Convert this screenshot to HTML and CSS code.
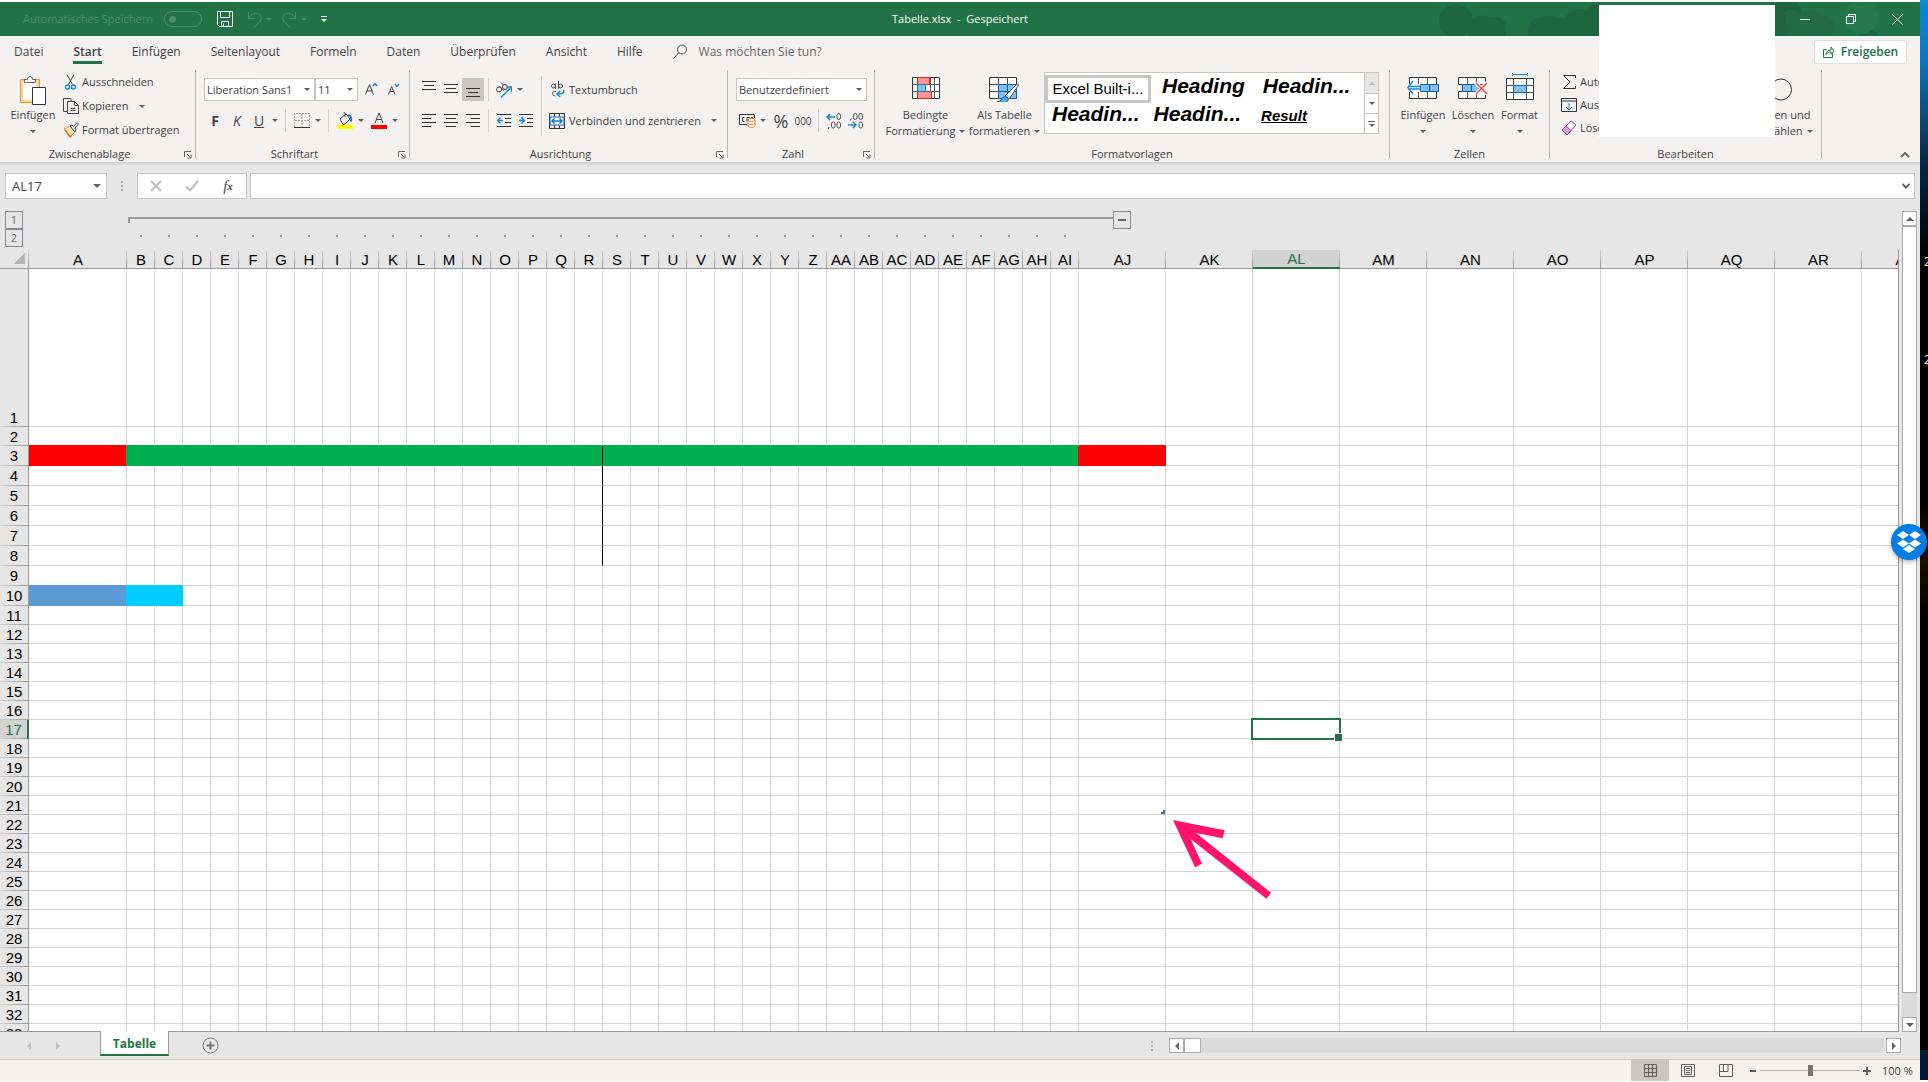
FILE: index.html
```html
<!DOCTYPE html>
<html lang="de">
<head>
    <meta charset="UTF-8">
    <meta name="viewport" content="width=device-width, initial-scale=1.0">
    <title>Tabelle.xlsx</title>
    <link rel="stylesheet" href="styles.css">
</head>
<body>

<div class="window">

    <!-- Titelleiste -->
    <header class="titlebar">
        <svg class="titlebar-art" width="500" height="34" viewBox="1420 2 500 34" aria-hidden="true">
            <g fill="#1e6640">
                <circle cx="1456" cy="21" r="17"/>
                <path d="M1468 36V19q12-6 22-2 14-2 16 9v10z"/>
                <path d="M1528 36q-2-18 12-18 10-4 24 0 8-10 22-9 6-6 14-5v32z"/>
                <path d="M1775 2h20q10 8 5 14 10-2 14 5 6 6-4 10-6 4-10 5h-25z"/>
                <circle cx="1868" cy="38" r="10"/>
            </g>
            <path d="M1784 12q10-6 16 2 12-8 20 2 14-2 14 10 0 8-6 10h-40z" fill="#216c43"/>
            <circle cx="1861" cy="17" r="17" fill="#247a4b"/>
        </svg>
        <div class="quick-access">
            <span class="autosave">Automatisches Speichern</span>
            <button class="toggle" aria-label="Automatisches Speichern"></button>
            <button class="qa-save" aria-label="Speichern">
                <svg width="16" height="16" viewBox="0 0 16 16" fill="none" stroke="#fff">
                    <path d="M.5.5h15v15h-13l-2-2zM3.500.5v6h9v-6M4.500 15.500v-5h7v5"/>
                    <path d="M6.500 12.500v3"/>
                </svg>
            </button>
            <button class="qa-dim" aria-label="Rückgängig">
                <svg width="15" height="17" viewBox="0 0 15 17" fill="none" stroke="#4b9068">
                    <path d="M1.500 1v6.500H8M1.500 7.500C4 3 7 2 10 2.500c5 1 5 6 2.500 8.500L7 16.500"/>
                </svg>
                <span class="caret"></span>
            </button>
            <button class="qa-dim" aria-label="Wiederholen">
                <svg width="15" height="17" viewBox="0 0 15 17" fill="none" stroke="#4b9068">
                    <path d="M13.500 1v6.500H7M13.500 7.500C11 3 8 2 5 2.500c-5 1-5 6-2.500 8.500L8 16.500"/>
                </svg>
                <span class="caret"></span>
            </button>
            <button class="qa-more" aria-label="Anpassen"><span class="caret"></span></button>
        </div>
        <div class="doc-title">Tabelle.xlsx&nbsp; -&nbsp; Gespeichert</div>
        <div class="window-buttons">
            <button aria-label="Minimieren"><svg width="11" height="11" viewBox="0 0 11 11" stroke="#fff"><path d="M0 5.500h10"/></svg></button>
            <button aria-label="Verkleinern"><svg width="11" height="11" viewBox="0 0 11 11" fill="none" stroke="#fff"><path d="M.5 2.500h7v7h-7zM2.500 2.500v-2h7v7h-2"/></svg></button>
            <button aria-label="Schließen"><svg width="11" height="11" viewBox="0 0 11 11" stroke="#fff"><path d="M.5.5l10 10M10.500.5l-10 10"/></svg></button>
        </div>
    </header>

    <!-- Menüband: Register -->
    <nav class="tabs">
        <a href="#">Datei</a>
        <a href="#" class="active">Start</a>
        <a href="#">Einfügen</a>
        <a href="#">Seitenlayout</a>
        <a href="#">Formeln</a>
        <a href="#">Daten</a>
        <a href="#">Überprüfen</a>
        <a href="#">Ansicht</a>
        <a href="#">Hilfe</a>
        <a href="#" class="tell-me">
            <svg width="15" height="15" viewBox="0 0 15 15" fill="none" stroke="#555"><circle cx="9" cy="5.500" r="4.500"/><path d="M5.800 8.700L.5 14.500"/></svg>
            Was möchten Sie tun?
        </a>
        <button class="share">
            <svg width="12" height="12" viewBox="0 0 12 12" fill="none" stroke="#217346"><path d="M3.500 3.500h-3v8h9v-4M3 8.500c0-3 2-4.500 5-4.500V1l3 4-3 3.500V6C6 6 4.500 6.500 3 8.500z"/></svg>
            Freigeben
        </button>
    </nav>

    <!-- Menüband: Gruppen -->
    <div class="ribbon">
        <section class="group group-clipboard">
            <div class="group-body">
                <button class="big-button">
                    <span class="icon">
                        <svg width="28" height="31" viewBox="0 0 28 31" fill="none">
                            <path d="M1.500 4.500h19v23h-19z" fill="#fff" stroke="#e8912d"/><path d="M3 6h16v20H3z" stroke="#fbd98f" stroke-width="2"/>
                            <path d="M5.500 7.500v-3h3c0-4 5-4 5 0h3v3z" fill="#fff" stroke="#666"/>
                            <path d="M13.500 12.500h13v17h-13z" fill="#fff" stroke="#333"/>
                        </svg>
                    </span>
                    <span>Einfügen</span>
                    <span class="line"><span class="caret"></span></span>
                </button>
                <div class="small-list">
                    <button>
                        <svg width="16" height="16" viewBox="0 0 16 16" fill="none" stroke="#444"><path d="M4 .5l5.500 10M11 .5l-5.500 10"/><g stroke="#1e8bcd" stroke-width="1.500"><circle cx="4.500" cy="13" r="2"/><circle cx="10.500" cy="13" r="2"/></g></svg>
                        Ausschneiden
                    </button>
                    <button>
                        <svg width="16" height="16" viewBox="0 0 16 16" fill="none" stroke="#444"><path d="M4.500 13.500h-4V.5h7M8 3.500h-3.500v12h11v-8l-4-4H8V.5M11.500 3.500v4h4M7.500 10.500h5M7.500 12.500h5"/></svg>
                        Kopieren <span class="caret"></span>
                    </button>
                    <button>
                        <svg width="16" height="16" viewBox="0 0 16 16" fill="none"><path d="M1 7l6-3 5 6-5 5z" fill="#fce0b8" stroke="#e8912d"/><path d="M2 8l5 7 2-2" stroke="#e06c1c" stroke-width="1.500"/><path d="M7 4l2-1 1.500 1.500L14 .5l1.500 1.500-3.500 4L13 8l-1 2z" fill="#fff" stroke="#444"/></svg>
                        Format übertragen
                    </button>
                </div>
            </div>
            <h2>Zwischenablage</h2>
            <button class="launcher" aria-label="Zwischenablage öffnen"><svg width="8" height="8" viewBox="0 0 8 8" fill="none" stroke="#666"><path d="M.5 6V.5H7M3 3l3.500 3.500M7 3.500V7H3.500"/></svg></button>
        </section>
        <span class="divider"></span>

        <section class="group group-font">
            <div class="group-body rows">
                <div class="row">
                    <span class="combo combo-font"><select aria-label="Schriftart"><option>Liberation Sans1</option></select><span class="caret"></span></span>
                    <span class="combo combo-size"><select aria-label="Schriftgrad"><option>11</option></select><span class="caret"></span></span>
                    <button class="tool spaced" aria-label="Schrift vergrößern"><svg width="15" height="14" viewBox="0 0 15 14" fill="none" stroke="#444"><path d="M1.500 11.500l4-10 4 10M3 8h5.500"/><path d="M9 3l2-2.500L13 3" stroke="#1e8bcd" stroke-width="1.500"/></svg></button>
                    <button class="tool" aria-label="Schrift verkleinern"><svg width="15" height="14" viewBox="0 0 15 14" fill="none" stroke="#444"><path d="M2.500 11.500l3-8 3.500 8M3.500 8.500h4.500"/><path d="M9 1l2 2.500L13 1" stroke="#1e8bcd" stroke-width="1.500"/></svg></button>
                </div>
                <div class="row">
                    <button class="tool letter"><b>F</b></button>
                    <button class="tool letter"><i>K</i></button>
                    <button class="tool letter"><u>U</u></button>
                    <button class="drop" aria-label="Unterstreichen"><span class="caret"></span></button>
                    <span class="sep"></span>
                    <button class="tool" aria-label="Rahmen"><svg width="16" height="16" viewBox="0 0 16 16" fill="none"><path d="M.5 14V.5h15V14M8 1v13M1 7.500h14" stroke="#aaa" stroke-dasharray="2 1"/><path d="M0 14.500h16" stroke="#333"/></svg></button>
                    <button class="drop" aria-label="Rahmenauswahl"><span class="caret"></span></button>
                    <span class="sep"></span>
                    <button class="tool" aria-label="Füllfarbe"><svg width="16" height="17" viewBox="0 0 16 17" fill="none"><path d="M3 7l6-5 4 5-5 5-2 .5zM8 5V.8L6.500.5" stroke="#444"/><path d="M11 3.500c3-.5 3.500 2 3 6" stroke="#2472b8" stroke-width="2"/><path d="M0 13h16v4H0z" fill="#ff0"/></svg></button>
                    <button class="drop" aria-label="Füllfarbe wählen"><span class="caret"></span></button>
                    <button class="tool spaced" aria-label="Schriftfarbe"><svg width="16" height="17" viewBox="0 0 16 17" fill="none"><path d="M4 11L8 1l4 10M5.500 7.500h5" stroke="#444"/><path d="M0 13h16v4H0z" fill="#f00"/></svg></button>
                    <button class="drop" aria-label="Schriftfarbe wählen"><span class="caret"></span></button>
                </div>
            </div>
            <h2>Schriftart</h2>
            <button class="launcher" aria-label="Schriftart öffnen"><svg width="8" height="8" viewBox="0 0 8 8" fill="none" stroke="#666"><path d="M.5 6V.5H7M3 3l3.500 3.500M7 3.500V7H3.500"/></svg></button>
        </section>
        <span class="divider"></span>

        <section class="group group-align">
            <div class="group-body">
                <div class="rows">
                    <div class="row">
                        <button class="tool" aria-label="Oben ausrichten"><svg width="14" height="18" viewBox="0 0 14 18" stroke="#333"><path d="M0 .5h14M2 4.500h10M0 8.500h14"/></svg></button>
                        <button class="tool" aria-label="Zentriert ausrichten"><svg width="14" height="18" viewBox="0 0 14 18" stroke="#333"><path d="M0 3.500h14M2 7.500h10M0 11.500h14"/></svg></button>
                        <button class="tool pressed" aria-label="Unten ausrichten"><svg width="14" height="18" viewBox="0 0 14 18" stroke="#333"><path d="M0 7.500h14M2 11.500h10M0 15.500h14"/></svg></button>
                        <span class="sep"></span>
                        <button class="tool" aria-label="Ausrichtung"><svg width="16" height="16" viewBox="0 0 16 16" fill="none" stroke="#444"><circle cx="3" cy="7.500" r="2.500"/><path d="M3.500 4l4 4.500"/><circle cx="9" cy="5" r="2.500"/><path d="M5 .5l3 3"/><path d="M5 15.500L15 5.500M10.500 5h5v5" stroke="#1e8bcd" stroke-width="1.500"/></svg></button>
                        <button class="drop" aria-label="Ausrichtung wählen"><span class="caret"></span></button>
                    </div>
                    <div class="row">
                        <button class="tool" aria-label="Linksbündig"><svg width="14" height="14" viewBox="0 0 14 14" stroke="#333"><path d="M0 .5h14M0 4.500h9M0 8.500h14M0 12.500h9"/></svg></button>
                        <button class="tool" aria-label="Zentriert"><svg width="14" height="14" viewBox="0 0 14 14" stroke="#333"><path d="M0 .5h14M2 4.500h10M0 8.500h14M2 12.500h10"/></svg></button>
                        <button class="tool" aria-label="Rechtsbündig"><svg width="14" height="14" viewBox="0 0 14 14" stroke="#333"><path d="M0 .5h14M5 4.500h9M0 8.500h14M5 12.500h9"/></svg></button>
                        <span class="sep"></span>
                        <button class="tool" aria-label="Einzug verkleinern"><svg width="14" height="14" viewBox="0 0 14 14" fill="none" stroke="#333"><path d="M0 .5h14M8 4.500h6M8 8.500h6M0 12.500h14"/><path d="M6 6.500H.5M3.500 3.500l-3 3 3 3" stroke="#1e8bcd" stroke-width="1.500"/></svg></button>
                        <button class="tool" aria-label="Einzug vergrößern"><svg width="14" height="14" viewBox="0 0 14 14" fill="none" stroke="#333"><path d="M0 .5h14M8 4.500h6M8 8.500h6M0 12.500h14"/><path d="M0 6.500h5.500M2.500 3.500l3 3-3 3" stroke="#1e8bcd" stroke-width="1.500"/></svg></button>
                    </div>
                </div>
                <span class="tall-sep"></span>
                <div class="rows">
                    <div class="row">
                        <button class="text-tool">
                            <svg width="16" height="17" viewBox="0 0 16 17" fill="none" stroke="#444"><circle cx="4.500" cy="5" r="2"/><path d="M6.500 2.500v5M9.500 0v7.500"/><circle cx="11.500" cy="5" r="2"/><path d="M7 10.500c-4-1.500-5 4.500-.5 4.500"/><path d="M14.500 9c1 3-1 4-6 4M11 10l-3 3 3 3" stroke="#1e8bcd" stroke-width="1.500"/></svg>
                            Textumbruch
                        </button>
                    </div>
                    <div class="row">
                        <button class="text-tool">
                            <svg width="16" height="16" viewBox="0 0 16 16" fill="none"><path d="M.5.5h15v15H.5zM5.500.5v3M10.500.5v3M5.500 12.500v3M10.500 12.500v3" stroke="#333"/><path d="M1 4h14v8H1z" fill="#fff" stroke="#0a64ad"/><path d="M3 8h10M5.500 5.500L3 8l2.500 2.500M10.500 5.500L13 8l-2.500 2.500" stroke="#1778c8" stroke-width="1.500"/></svg>
                            Verbinden und zentrieren <span class="caret"></span>
                        </button>
                    </div>
                </div>
            </div>
            <h2>Ausrichtung</h2>
            <button class="launcher" aria-label="Ausrichtung öffnen"><svg width="8" height="8" viewBox="0 0 8 8" fill="none" stroke="#666"><path d="M.5 6V.5H7M3 3l3.500 3.500M7 3.500V7H3.500"/></svg></button>
        </section>
        <span class="divider"></span>

        <section class="group group-number">
            <div class="group-body rows">
                <div class="row">
                    <span class="combo combo-number"><select aria-label="Zahlenformat"><option>Benutzerdefiniert</option></select><span class="caret"></span></span>
                </div>
                <div class="row">
                    <button class="tool" aria-label="Währung"><svg width="17" height="14" viewBox="0 0 17 14" fill="none"><path d="M8 10.500H.5V.5h15V4" stroke="#333"/><path d="M5.500 3.500h-2v4h2M8 7.500v-4h2.500M12 3.500h2" stroke="#444"/><path d="M9 6v6c0 2 7 2 7 0V6" fill="#fff" stroke="#e8862d"/><ellipse cx="12.500" cy="6" rx="3.500" ry="1.500" fill="#fff" stroke="#e8862d"/><path d="M9 9c0 2 7 2 7 0" stroke="#e8862d"/></svg></button>
                    <button class="drop" aria-label="Währung wählen"><span class="caret"></span></button>
                    <button class="tool percent spaced">%</button>
                    <button class="tool thousands">000</button>
                    <span class="sep"></span>
                    <button class="tool" aria-label="Dezimalstelle hinzufügen"><svg width="16" height="16" viewBox="0 0 16 16" fill="none" stroke="#555"><rect x="11" y=".5" width="3.500" height="6" rx="1.700"/><rect x="5.500" y="9" width="3.500" height="6" rx="1.700"/><rect x="11" y="9" width="3.500" height="6" rx="1.700"/><path d="M3 14l-.8 2"/><path d="M9 4H1M4 1L1 4l3 3" stroke="#1e8bcd" stroke-width="1.500"/></svg></button>
                    <button class="tool" aria-label="Dezimalstelle löschen"><svg width="16" height="16" viewBox="0 0 16 16" fill="none" stroke="#555"><rect x="5.500" y=".5" width="3.500" height="6" rx="1.700"/><rect x="11" y=".5" width="3.500" height="6" rx="1.700"/><rect x="11" y="9" width="3.500" height="6" rx="1.700"/><path d="M3 5.500L2.200 7.500"/><path d="M0 12h8M5 9l3 3-3 3" stroke="#1e8bcd" stroke-width="1.500"/></svg></button>
                </div>
            </div>
            <h2>Zahl</h2>
            <button class="launcher" aria-label="Zahl öffnen"><svg width="8" height="8" viewBox="0 0 8 8" fill="none" stroke="#666"><path d="M.5 6V.5H7M3 3l3.500 3.500M7 3.500V7H3.500"/></svg></button>
        </section>
        <span class="divider"></span>

        <section class="group group-styles">
            <div class="group-body">
                <button class="big-button w-conditional">
                    <span class="icon">
                        <svg width="28" height="22" viewBox="0 0 28 22" fill="none">
                            <path d="M.5.5h27v21H.5z" fill="#fff" stroke="#333"/><path d="M.5 7.500h27M.5 14.500h27M5.500.5v21M18.500.5v21M22.500.5v21" stroke="#555"/>
                            <path d="M5.500.5h12v7h-12zM5.500 14.500h14v7h-14z" fill="#ff9494" stroke="#d8202a"/><path d="M5.500 7.500h8v7h-8z" fill="#83beec" stroke="#1e74bd"/><path d="M14 8h4v6h-4z" fill="#fff"/>
                        </svg>
                    </span>
                    <span>Bedingte</span>
                    <span class="line">Formatierung <span class="caret"></span></span>
                </button>
                <button class="big-button w-table">
                    <span class="icon">
                        <svg width="32" height="28" viewBox="0 -3 32 28" fill="none">
                            <path d="M.5.5h27v21H.5z" fill="#fff" stroke="#333"/><path d="M.5 7.500h27M.5 14.500h27M9.500.5v21M18.500.5v21" stroke="#555"/>
                            <path d="M9.500 7.500h18v14h-18z" fill="#83beec"/><path d="M9.500 7.500h18v14h-18zM9.500 14.500h18M18.500 7.500v14" stroke="#0a64ad"/>
                            <path d="M16 19L27 8q3-2 2 1l-9 13z" fill="#fff" stroke="#555"/><path d="M8 25q4 0 5-4 3-3 6 0 1 5-6 5z" fill="#5ea6e0" stroke="#0a64ad"/>
                        </svg>
                    </span>
                    <span>Als Tabelle</span>
                    <span class="line">formatieren <span class="caret"></span></span>
                </button>
                <div class="gallery">
                    <div class="gallery-items">
                        <div class="gallery-row first">
                            <button class="style-default">Excel Built-i...</button>
                            <button class="style-heading">Heading</button>
                            <button class="style-heading">Headin...</button>
                        </div>
                        <div class="gallery-row">
                            <button class="style-heading">Headin...</button>
                            <button class="style-heading">Headin...</button>
                            <button class="style-result">Result</button>
                        </div>
                    </div>
                    <div class="gallery-scroll">
                        <button class="up" aria-label="Nach oben"><span class="caret"></span></button>
                        <button aria-label="Nach unten"><span class="caret"></span></button>
                        <button class="more" aria-label="Weitere"><span class="caret"></span></button>
                    </div>
                </div>
            </div>
            <h2>Formatvorlagen</h2>
        </section>
        <span class="divider"></span>

        <section class="group group-cells">
            <div class="group-body">
                <button class="big-button w-cell">
                    <span class="icon">
                        <svg width="32" height="22" viewBox="0 0 32 22" fill="none">
                            <path d="M2.500.5h27v21h-27z" fill="#fff" stroke="#333"/><path d="M11.500.5v21M20.500.5v21" stroke="#555"/>
                            <path d="M1 7h30v8H1z" fill="#f3f2f1"/><path d="M13.500 7.500h18v7h-18z" fill="#83beec" stroke="#0a64ad"/><path d="M22.500 7.500v7" stroke="#0a64ad"/>
                            <path d="M6 4L.8 10.500 6 17M1 9.500h13M1 12h13" stroke="#1e8bcd" stroke-width="1.300"/>
                        </svg>
                    </span>
                    <span>Einfügen</span>
                    <span class="line"><span class="caret"></span></span>
                </button>
                <button class="big-button w-cell">
                    <span class="icon">
                        <svg width="30" height="22" viewBox="0 0 30 22" fill="none">
                            <path d="M.5.5h27v7H.5zM.5 14.500h27v7H.5z" fill="#fff" stroke="#333"/><path d="M9.500.5v7M18.500.5v7M9.500 14.500v7M18.500 14.500v7" stroke="#555"/>
                            <path d="M4.500 7.500h16v7h-16zM13.500 7.500v7" fill="#83beec" stroke="#0a64ad"/>
                            <path d="M18 6l11 11M29 6L18 17" stroke="#f3f2f1" stroke-width="4"/><path d="M18 6l11 11M29 6L18 17" stroke="#e8504c" stroke-width="1.500"/>
                        </svg>
                    </span>
                    <span>Löschen</span>
                    <span class="line"><span class="caret"></span></span>
                </button>
                <button class="big-button w-format">
                    <span class="icon">
                        <svg width="28" height="32" viewBox="0 -6 28 32" fill="none">
                            <path d="M.5.5h27v21H.5z" fill="#fff" stroke="#333"/><path d="M.5 7.500h27M.5 14.500h27M7.500.5v21M20.500.5v21" stroke="#555"/>
                            <path d="M7.500 7.500h13v7h-13z" fill="#83beec" stroke="#0a64ad"/><path d="M6.500-5v3M21.500-5v3M6.500-3.500h15" stroke="#1e8bcd"/>
                        </svg>
                    </span>
                    <span>Format</span>
                    <span class="line"><span class="caret"></span></span>
                </button>
            </div>
            <h2>Zellen</h2>
        </section>
        <span class="divider"></span>

        <section class="group group-edit">
            <div class="group-body">
                <div class="small-list tight">
                    <button><svg width="16" height="16" viewBox="0 0 16 16" fill="none" stroke="#333"><path d="M14.500 4V1.500h-12L9 8l-6.500 6.500h12V12"/></svg>AutoSumme</button>
                    <button><svg width="16" height="16" viewBox="0 0 16 16" fill="none" stroke="#333"><path d="M.5 1.500h15v13H.5zM.5 4h15"/><path d="M8 6v7M5 10l3 3 3-3" stroke="#1e8bcd"/></svg>Ausfüllen</button>
                    <button><svg width="16" height="16" viewBox="0 0 16 16" fill="none"><path d="M1 10l9-9 5 4-9 10z" fill="#fff" stroke="#a33bab"/><path d="M1 10l4-4 5 4.500L6 15z" fill="#d9a3dd" stroke="#a33bab"/></svg>Löschen</button>
                </div>
                <button class="big-button w-find">
                    <span class="icon"><svg width="28" height="26" viewBox="0 0 28 26" fill="none" stroke="#333"><circle cx="15" cy="11.500" r="10.500"/><path d="M7.500 19L1 25.500"/></svg></span>
                    <span>Suchen und</span>
                    <span class="line">auswählen <span class="caret"></span></span>
                </button>
            </div>
            <h2>Bearbeiten</h2>
        </section>
        <span class="divider"></span>
        <button class="collapse" aria-label="Menüband reduzieren"><svg width="10" height="6" viewBox="0 0 10 6" fill="none" stroke="#666" stroke-width="2"><path d="M1 5l4-4 4 4"/></svg></button>
    </div>

    <!-- Bearbeitungsleiste -->
    <div class="formula-bar">
        <span class="name-box"><input type="text" value="AL17" aria-label="Namenfeld"><span class="caret"></span></span>
        <span class="grip"></span>
        <div class="formula-buttons">
            <button aria-label="Abbrechen"><svg width="12" height="12" viewBox="0 0 12 12" stroke="#bbb" stroke-width="1.800"><path d="M1 1l10 10M11 1L1 11"/></svg></button>
            <button aria-label="Eingeben"><svg width="14" height="12" viewBox="0 0 14 12" fill="none" stroke="#bbb" stroke-width="2"><path d="M1 6.500l4 4L13 1"/></svg></button>
            <button class="fx"><i>f</i><sub>x</sub></button>
        </div>
        <span class="formula-input"><input type="text" aria-label="Bearbeitungsleiste"><svg width="8" height="6" viewBox="0 0 8 6" fill="none" stroke="#666" stroke-width="2"><path d="M.5 1L4 4.500 7.500 1"/></svg></span>
    </div>

    <!-- Tabellenblatt -->
    <main class="workbook">
        <div class="sheet">
            <div class="outline">
                <div class="outline-levels">
                    <button>1</button>
                    <button>2</button>
                </div>
                <div class="outline-track">
                    <div class="outline-line"><span class="outline-bar"></span><button aria-label="Gruppe ausblenden"></button></div>
                    <div class="outline-dots" id="outlineDots"></div>
                </div>
            </div>
            <div class="grid-wrap">
                <table class="grid" id="grid"></table>
            </div>
            <svg class="arrow" width="100" height="81" viewBox="157 357 300 243" aria-hidden="true">
                <path d="M160 360l155 31-6 24-80-16 225 179-14 18L213 417l34 74-21 11z" fill="#ff1469"/>
            </svg>
        </div>
        <div class="v-scroll">
            <button aria-label="Nach oben blättern"><span class="caret"></span></button>
            <div class="v-track"><div class="v-thumb"></div></div>
            <button aria-label="Nach unten blättern"><span class="caret"></span></button>
        </div>
    </main>

    <!-- Blattregister -->
    <div class="sheet-bar">
        <button class="nav-arrow" aria-label="Vorheriges Blatt"></button>
        <button class="nav-arrow next" aria-label="Nächstes Blatt"></button>
        <button class="sheet-tab">Tabelle</button>
        <button class="add-sheet" aria-label="Neues Blatt"><svg width="17" height="17" viewBox="0 0 17 17" fill="none" stroke="#777"><circle cx="8.500" cy="8.500" r="7.500"/><path d="M8.500 4.500v8M4.500 8.500h8" stroke-width="2"/></svg></button>
        <span class="grip"></span>
        <div class="h-scroll">
            <button class="left" aria-label="Nach links blättern"></button>
            <div class="h-track"><div class="h-thumb"></div></div>
            <button class="right" aria-label="Nach rechts blättern"></button>
        </div>
    </div>

    <footer class="status-bar">
        <button class="view active" aria-label="Normal"><svg width="13" height="13" viewBox="0 0 13 13" fill="none" stroke="#605e5c"><path d="M.5.5h12v12H.5zM4.500.5v12M8.500.5v12M.5 4.500h12M.5 8.500h12"/></svg></button>
        <button class="view" aria-label="Seitenlayout"><svg width="14" height="13" viewBox="0 0 14 13" fill="none" stroke="#605e5c"><path d="M.5.5h13v12H.5zM3.500 2.500h7v8h-7zM5 4.500h4M5 6.500h4M5 8.500h4"/></svg></button>
        <button class="view" aria-label="Umbruchvorschau"><svg width="14" height="13" viewBox="0 0 14 13" fill="none" stroke="#605e5c"><path d="M.5.5h13v12H.5zM4.500.5v7M9 .5v7H.5"/></svg></button>
        <button class="zoom-button" aria-label="Verkleinern"><svg width="8" height="8" viewBox="0 0 8 8" stroke="#605e5c" stroke-width="2"><path d="M1 4h6"/></svg></button>
        <input class="zoom" type="range" min="0" max="100" value="50" aria-label="Zoom">
        <button class="zoom-button" aria-label="Vergrößern"><svg width="8" height="8" viewBox="0 0 8 8" stroke="#605e5c" stroke-width="2"><path d="M0 4h8M4 0v8"/></svg></button>
        <span class="zoom-value">100 %</span>
    </footer>

    <div class="cover"></div>
</div>

<!-- Sichtbarer Rand des Desktops -->
<aside class="desktop">
    <span>2</span>
    <span>2</span>
</aside>
<button class="dropbox" aria-label="Dropbox">
    <svg width="24" height="22" viewBox="0 0 24 22" fill="#fff"><path d="M6 0l6 4-6 4-6-4zM18 0l6 4-6 4-6-4zM6 8.500l6 4-6 4-6-4zM18 8.500l6 4-6 4-6-4zM12 14l6 4-6 4-6-4z"/></svg>
</button>

<script src="script.js"></script>
</body>
</html>
```
FILE: styles.css
```css
* {
    box-sizing: border-box;
}
body {
    margin: 0;
    padding: 2px 0 1px;
    height: 100vh;
    display: flex;
    position: relative;
    overflow: hidden;
    background: #fff;
    color: #444;
    font-family: "Open Sans", "Noto Sans", sans-serif;
    font-size: 11px;
    line-height: 16px;
}
button, input, select {
    font: inherit;
    color: inherit;
    margin: 0;
    padding: 0;
    border: 0;
    background: none;
    outline: none;
}
button {
    display: flex;
    align-items: center;
    justify-content: center;
    white-space: nowrap;
}
a {
    color: inherit;
    text-decoration: none;
}
svg {
    flex: none;
    display: block;
}
.window {
    flex: 1;
    min-width: 0;
    display: flex;
    flex-direction: column;
    position: relative;
    background: #e6e6e6;
}
.caret {
    flex: none;
    width: 0;
    height: 0;
    border: 3px solid transparent;
    border-top-color: #605e5c;
    border-bottom-width: 0;
}

/* Titelleiste */
.titlebar {
    position: relative;
    display: grid;
    grid-template-columns: 1fr auto 1fr;
    align-items: center;
    height: 34px;
    background: #217346;
    color: #fff;
}
.titlebar-art {
    position: absolute;
    right: 0;
    top: 0;
}
.quick-access {
    display: flex;
    align-items: center;
    padding-left: 23px;
}
.autosave {
    width: 141px;
    color: #4b9068;
    white-space: nowrap;
}
.toggle {
    width: 38px;
    height: 16px;
    padding-left: 4px;
    border: 1px solid #4b9068;
    border-radius: 8px;
    justify-content: flex-start;
}
.toggle::before {
    content: "";
    width: 7px;
    height: 7px;
    border-radius: 50%;
    background: #4b9068;
}
.qa-save {
    margin-left: 15px;
}
.qa-dim {
    gap: 4px;
    margin-left: 15px;
    width: 23px;
}
.qa-dim .caret {
    border-top-color: #4b9068;
}
.qa-more {
    flex-direction: column;
    gap: 2px;
    margin-left: 15px;
}
.qa-more::before {
    content: "";
    width: 6px;
    height: 1px;
    background: #fff;
}
.qa-more .caret {
    border-top-color: #fff;
}
.qa-dim + .qa-dim {
    margin-left: 12px;
}
.window-buttons {
    position: relative;
    display: flex;
    justify-content: flex-end;
}
.window-buttons button {
    width: 46px;
    height: 34px;
}

/* Register */
.tabs {
    display: flex;
    align-items: center;
    gap: 30px;
    height: 30px;
    padding: 2px 13px 0 14px;
    background: #f3f2f1;
    white-space: nowrap;
    font-size: 12px;
}
.tabs a.active {
    position: relative;
    font-weight: 600;
}
.tabs a.active::after {
    content: "";
    position: absolute;
    left: 0;
    right: 0;
    bottom: -4px;
    height: 3px;
    background: #217346;
}
.tabs .tell-me {
    display: flex;
    gap: 11px;
    color: #666;
}
.share {
    gap: 6px;
    margin-left: auto;
    width: 93px;
    height: 24px;
    border: 1px solid #e1dfdd;
    border-radius: 2px;
    background: #fff;
    color: #217346;
    font-weight: 600;
}

/* Menüband */
.ribbon {
    display: flex;
    align-items: flex-start;
    height: 99px;
    padding-top: 4px;
    background: linear-gradient(#f3f2f1 96px, #d0cecc 96px, #e0dfde);
}
.divider {
    width: 1px;
    height: 88px;
    background: #b8b6b4;
}
.group {
    position: relative;
    flex: none;
    display: flex;
    flex-direction: column;
}
.group h2 {
    margin: 0;
    font-size: 11px;
    font-weight: normal;
    line-height: 16px;
    text-align: center;
}
.group-body {
    display: flex;
    height: 76px;
}
.group-clipboard {
    width: 195px;
}
.group-font {
    width: 213px;
}
.group-align {
    width: 317px;
}
.group-number {
    width: 146px;
}
.group-styles {
    width: 514px;
}
.group-cells {
    width: 159px;
}
.group-edit {
    width: 271px;
}
.group-clipboard h2, .group-font h2, .group-align h2, .group-number h2 {
    padding-right: 16px;
}
.launcher {
    position: absolute;
    right: 3px;
    bottom: 3px;
}
.big-button {
    flex-direction: column;
    justify-content: flex-start;
    padding-top: 4px;
    width: 54px;
}
.big-button .icon {
    display: flex;
    align-items: center;
    justify-content: center;
    height: 33px;
}
.big-button .line {
    display: flex;
    align-items: center;
    gap: 4px;
    height: 16px;
}
.group-styles .icon, .group-cells .icon {
    height: 33px;
    padding-bottom: 5px;
}
.group-clipboard .group-body {
    padding-left: 6px;
    gap: 3px;
}
.small-list button {
    gap: 3px;
    height: 24px;
}
.small-list .caret {
    margin-left: 8px;
}
.small-list.tight button {
    height: 23px;
}
.rows {
    display: flex;
    flex-direction: column;
    gap: 8px;
    padding-top: 8px;
}
.row {
    display: flex;
    height: 23px;
}
.group-font .rows, .group-number .rows {
    padding-left: 8px;
}
.tool {
    width: 22px;
}
.tool.pressed {
    background: #c8c6c4;
}
.spaced {
    margin-left: 2px;
}
.drop {
    width: 10px;
}
.letter {
    font-size: 14px;
}
.sep {
    width: 1px;
    margin: 0 4px;
    background: #d2d0ce;
}
.group-font .sep {
    margin: 0 5px;
}
.tall-sep {
    width: 1px;
    height: 60px;
    margin: 6px 7px 0 4px;
    background: #d2d0ce;
}
.group-align .group-body {
    padding-left: 8px;
}
.text-tool {
    gap: 4px;
}
.text-tool .caret {
    margin-left: 6px;
}
.percent {
    font-size: 18px;
}
.thousands {
    font-size: 10px;
}
.combo {
    display: flex;
    align-items: center;
    border: 1px solid #c6c6c6;
    background: #fff;
    padding-right: 4px;
}
.combo select {
    flex: 1;
    min-width: 0;
    height: 21px;
    padding-left: 2px;
    appearance: none;
}
.combo-font {
    width: 111px;
}
.combo-size {
    width: 43px;
}
.combo-number {
    width: 131px;
}
.group-styles .group-body, .group-cells .group-body {
    padding-left: 8px;
}
.w-conditional {
    width: 85px;
}
.w-table {
    width: 73px;
}
.w-cell {
    width: 50px;
}
.w-format {
    width: 43px;
}
.w-find {
    width: 64px;
    margin: 0 9px 0 auto;
}
.group-edit .small-list {
    padding-left: 11px;
}

/* Formatvorlagen */
.gallery {
    display: flex;
    width: 335px;
    height: 62px;
    margin: 2px 0 0 3px;
    border: 1px solid #c6c6c6;
    background: #fff;
    color: #000;
    font-family: "Liberation Sans", Arial, sans-serif;
}
.gallery-items {
    flex: 1;
    padding-top: 2px;
}
.gallery-row {
    display: flex;
    height: 28px;
}
.gallery-row.first {
    gap: 4px;
}
.style-default {
    width: 106px;
    border: 3px solid #c6c6c6;
    font-size: 15px;
}
.style-heading {
    height: 21px;
    padding: 0 7px;
    font-size: 21px;
    font-weight: bold;
    font-style: italic;
}
.style-result {
    height: 25px;
    padding: 0 13px;
    font-size: 15px;
    font-weight: bold;
    font-style: italic;
    text-decoration: underline;
}
.gallery-scroll {
    display: grid;
    grid-template-rows: repeat(3, 1fr);
    width: 14px;
    border-left: 1px solid #c6c6c6;
}
.gallery-scroll button + button {
    border-top: 1px solid #c6c6c6;
}
.gallery-scroll .up {
    background: #e6e6e6;
}
.gallery-scroll .up .caret {
    transform: rotate(180deg);
    border-top-color: #bbb;
}
.gallery-scroll .more {
    flex-direction: column;
    gap: 2px;
}
.gallery-scroll .more::before {
    content: "";
    width: 7px;
    height: 1px;
    background: #605e5c;
}
.collapse {
    align-self: flex-end;
    margin: 0 10px 7px auto;
}

/* Bearbeitungsleiste */
.formula-bar {
    display: flex;
    height: 26px;
    margin: 8px 5px 0;
}
.name-box, .formula-buttons, .formula-input {
    display: flex;
    align-items: center;
    border: 1px solid #c6c6c6;
    background: #fff;
}
.name-box {
    width: 102px;
    padding: 0 5px 0 6px;
    font-size: 13px;
}
.name-box input {
    flex: 1;
    min-width: 0;
}
.name-box .caret {
    border-width: 4px 4px 0;
}
.grip {
    align-self: center;
    width: 2px;
    height: 10px;
    background: repeating-linear-gradient(#aaa 0 2px, transparent 2px 4px);
}
.formula-bar .grip {
    margin: 0 14px;
}
.formula-buttons {
    width: 110px;
}
.formula-buttons button {
    width: 36px;
}
.fx {
    font-family: "Liberation Serif", "Times New Roman", serif;
    font-size: 15px;
}
.fx sub {
    font-size: 11px;
    font-style: italic;
    font-weight: bold;
}
.formula-input {
    flex: 1;
    margin-left: 3px;
    padding-right: 4px;
}
.formula-input input {
    flex: 1;
    padding: 0 6px;
}

/* Tabellenblatt */
.workbook {
    flex: 1;
    min-height: 0;
    display: flex;
}
.sheet {
    flex: 1;
    min-width: 0;
    position: relative;
    display: flex;
    flex-direction: column;
}
.outline {
    display: flex;
    height: 51px;
    padding-top: 12px;
}
.outline-levels {
    width: 127px;
    padding-left: 5px;
}
.outline button {
    width: 18px;
    height: 18px;
    border: 1px solid #85878f;
    color: #666;
}
.outline-line {
    display: flex;
    height: 18px;
}
.outline-bar {
    width: 985px;
    height: 6px;
    margin: 6px 0 0 1px;
    border-top: 2px solid #999;
    border-left: 2px solid #999;
}
.outline-line button::before {
    content: "";
    width: 8px;
    height: 2px;
    background: #666;
}
.outline-dots {
    display: flex;
    padding-top: 6px;
}
.outline-dots span {
    width: 28px;
    height: 2px;
    background: linear-gradient(#999, #999) center / 2px 2px no-repeat;
}
.grid-wrap {
    flex: 1;
    min-height: 0;
    overflow: hidden;
    border-right: 1px solid #999;
    border-bottom: 1px solid #999;
}
.grid {
    width: 0;
    table-layout: fixed;
    border-collapse: separate;
    border-spacing: 0;
    background: #fff;
    color: #000;
    font-family: "Liberation Sans", Arial, sans-serif;
    font-size: 15px;
}
.grid .col-index {
    width: 29px;
}
.grid .col-first {
    width: 98px;
}
.grid .col-narrow {
    width: 28px;
}
.grid .col-wide {
    width: 87px;
}
.grid th, .grid td {
    height: 19px;
    padding: 0;
    line-height: 18px;
}
.grid th {
    background: #e6e6e6;
    font-weight: normal;
    white-space: nowrap;
    overflow: hidden;
}
.grid thead th {
    background: linear-gradient(#d0d0d0, #999) right / 1px 100% no-repeat #e6e6e6;
    border-bottom: 1px solid #999;
    padding-top: 1px;
    line-height: 17px;
}
.grid thead .selected {
    background-color: #d2d2d2;
    border-bottom: 2px solid #217346;
    line-height: 16px;
    color: #217346;
}
.grid tbody th {
    background: linear-gradient(90deg, #d0d0d0, #999) bottom / 100% 1px no-repeat #e6e6e6;
    border-right: 1px solid #999;
    vertical-align: bottom;
}
.grid tbody .selected {
    background-color: #d2d2d2;
    border-right: 2px solid #217346;
    color: #217346;
}
.grid thead .corner {
    padding: 0 3px 3px 0;
}
.corner::before {
    content: "";
    display: block;
    width: 11px;
    height: 11px;
    margin: 2px 0 0 14px;
    background: linear-gradient(135deg, transparent 50%, #b4b4b4 50%);
}
.grid td {
    border-right: 1px solid #d4d4d4;
    border-bottom: 1px solid #d4d4d4;
}
.grid .medium th, .grid .medium td {
    height: 20px;
}
.grid .medium th {
    padding-bottom: 1px;
}
.grid .tall th, .grid .tall td {
    height: 158px;
}
.grid .red {
    background: #f00;
    border-color: #f00;
}
.grid .green {
    background: #00b050;
    border-color: #00b050;
}
.grid .blue {
    background: #5b9bd5;
    border-color: #5b9bd5;
}
.grid .cyan {
    background: #0cf;
    border-color: #0cf;
}
.grid .red-below {
    border-bottom-color: #f00;
}
.grid .green-below {
    border-bottom-color: #00b050;
}
.grid .blue-below {
    border-bottom-color: #5b9bd5;
}
.grid .cyan-below {
    border-bottom-color: #0cf;
}
.grid .red-right {
    border-right-color: #f00;
}
.grid .green-right {
    border-right-color: #00b050;
}
.grid .cyan-right {
    border-right-color: #0cf;
}
.grid .marker-line {
    border-right-color: #000;
}
.grid .active-cell, .grid .note-cell {
    position: relative;
}
.active-cell::before {
    content: "";
    position: absolute;
    inset: -2px;
    border: 2px solid #217346;
}
.active-cell::after {
    content: "";
    position: absolute;
    right: -4px;
    bottom: -4px;
    width: 7px;
    height: 7px;
    border: 1px solid #fff;
    background: #217346;
}
.note-cell::after {
    content: "";
    position: absolute;
    right: 0;
    bottom: 0;
    width: 4px;
    height: 4px;
    background: #4a5fb0;
    clip-path: polygon(50% 0, 100% 0, 100% 100%, 0 100%, 0 50%, 50% 50%);
}
.arrow {
    position: absolute;
    left: 1172px;
    top: 620px;
}

/* Bildlaufleisten */
.v-scroll {
    display: flex;
    flex-direction: column;
    width: 15px;
    margin: 12px 3px 0 3px;
}
.v-scroll button {
    height: 15px;
    border: 1px solid #aaa;
    background: #fff;
}
.v-scroll .caret {
    border-width: 4px 4px 0;
}
.v-scroll button:first-child .caret {
    transform: rotate(180deg);
}
.v-track {
    flex: 1;
    background: #dadada;
}
.v-thumb {
    height: 97%;
    border: 1px solid #aaa;
    background: #fff;
}
.h-scroll {
    display: flex;
    flex: 0 1 732px;
    height: 15px;
    margin-right: 19px;
}
.h-scroll button {
    width: 15px;
    border: 1px solid #aaa;
    background: #fff;
}
.h-scroll button::before {
    content: "";
    border: 4px solid transparent;
    border-right-color: #666;
    border-left-width: 0;
}
.h-scroll .right::before {
    border-width: 4px 0 4px 4px;
    border-left-color: #666;
}
.h-track {
    flex: 1;
    margin-right: 2px;
    background: #dadada;
}
.h-thumb {
    width: 17px;
    height: 15px;
    border: 1px solid #aaa;
    background: #fff;
}

/* Blattregister */
.sheet-bar {
    display: flex;
    align-items: center;
    height: 28px;
    padding-left: 27px;
    border-bottom: 1px solid #c6c6c6;
}
.nav-arrow {
    width: 4px;
    margin-right: 25px;
    border: solid transparent;
    border-width: 4px 4px 4px 0;
    border-right-color: #c0c0c0;
}
.nav-arrow.next {
    margin-right: 40px;
    border-width: 4px 0 4px 4px;
    border-left-color: #c0c0c0;
}
.sheet-tab {
    align-self: flex-start;
    position: relative;
    width: 69px;
    height: 25px;
    margin-top: -1px;
    padding-top: 3px;
    border: 1px solid #999;
    border-width: 0 1px 2px;
    border-bottom-color: #217346;
    background: #fff;
    color: #217346;
    font-size: 12px;
    font-weight: bold;
}
.add-sheet {
    margin-left: 33px;
}
.sheet-bar .grip {
    margin: 0 16px 0 auto;
}

/* Statusleiste */
.status-bar {
    display: flex;
    justify-content: flex-end;
    align-items: center;
    height: 21px;
    padding-right: 8px;
    background: #f3f2f1;
}
.view {
    width: 38px;
    height: 21px;
}
.view.active {
    background: #c8c6c4;
}
.zoom-button {
    margin: 0 3px;
}
.view + .zoom-button {
    margin-left: 4px;
}
.zoom {
    appearance: none;
    width: 100px;
    height: 11px;
    background: linear-gradient(#aaa, #aaa) center / 100% 1px no-repeat;
}
.zoom::-webkit-slider-thumb {
    appearance: none;
    width: 5px;
    height: 11px;
    background: #767472;
}
.zoom-value {
    width: 30px;
    margin-left: 8px;
    line-height: 14px;
    white-space: nowrap;
}

/* Überlagernde Elemente */
.cover {
    position: absolute;
    top: 3px;
    right: 145px;
    width: 176px;
    height: 132px;
    background: #fff;
}
.desktop {
    flex: none;
    width: 8px;
    margin: -2px 0 1px;
    padding: 254px 0 0 4px;
    overflow: hidden;
    background: linear-gradient(#0a8ad8, #0878c4 60px, #022a48 160px, #000 260px, #000 500px, #1c1200 550px, #000 620px, #000 1050px, #001a33 1050px);
    color: #fff;
    font-size: 12px;
}
.desktop span {
    display: block;
    height: 98px;
}
.dropbox {
    position: absolute;
    right: 1px;
    top: 50%;
    width: 36px;
    height: 36px;
    margin-top: -17px;
    border-radius: 50%;
    background: #007ee5;
    box-shadow: 0 2px 4px rgba(0, 0, 0, 0.3);
}
```
FILE: script.js
```js
const NARROW_COLS = 34;   // B bis AI
const LAST_COL = 45;      // AS
const ROWS = 33;

function colName(n) {
    let name = '';
    while (n > 0) {
        name = String.fromCharCode(65 + (n - 1) % 26) + name;
        n = Math.floor((n - 1) / 26);
    }
    return name;
}

function fillOf(row, col) {
    if (row === 3) {
        if (col === 1 || col === 36) return 'red';
        if (col > 1 && col < 36) return 'green';
    }
    if (row === 10) {
        if (col === 1) return 'blue';
        if (col === 2 || col === 3) return 'cyan';
    }
    return '';
}

function cellClass(row, col) {
    const classes = [];
    const fill = fillOf(row, col);
    const below = fillOf(row + 1, col);
    const right = fillOf(row, col + 1);
    if (fill) classes.push(fill);
    if (below) classes.push(below + '-below');
    if (fill && right && right !== fill) classes.push(right + '-right');
    if (col === 18 && row >= 3 && row <= 8) classes.push('marker-line');
    if (row === 17 && col === 38) classes.push('active-cell');
    if (row === 21 && col === 36) classes.push('note-cell');
    return classes.join(' ');
}

function colWidthClass(col) {
    if (col === 1) return 'col-first';
    return col <= NARROW_COLS + 1 ? 'col-narrow' : 'col-wide';
}

function buildGrid() {
    let html = '<colgroup><col class="col-index">';
    for (let c = 1; c <= LAST_COL; c++) {
        html += `<col class="${colWidthClass(c)}">`;
    }
    html += '</colgroup><thead><tr><th class="corner"></th>';
    for (let c = 1; c <= LAST_COL; c++) {
        html += `<th${c === 38 ? ' class="selected"' : ''}>${colName(c)}</th>`;
    }
    html += '</tr></thead><tbody>';
    for (let r = 1; r <= ROWS; r++) {
        const size = r === 1 ? 'tall' : (r >= 3 && r <= 10 ? 'medium' : '');
        html += `<tr class="${size}"><th${r === 17 ? ' class="selected"' : ''}>${r}</th>`;
        for (let c = 1; c <= LAST_COL; c++) {
            html += `<td class="${cellClass(r, c)}"></td>`;
        }
        html += '</tr>';
    }
    document.getElementById('grid').innerHTML = html + '</tbody>';
}

function buildOutlineDots() {
    document.getElementById('outlineDots').innerHTML = '<span></span>'.repeat(NARROW_COLS);
}

buildGrid();
buildOutlineDots();
```
